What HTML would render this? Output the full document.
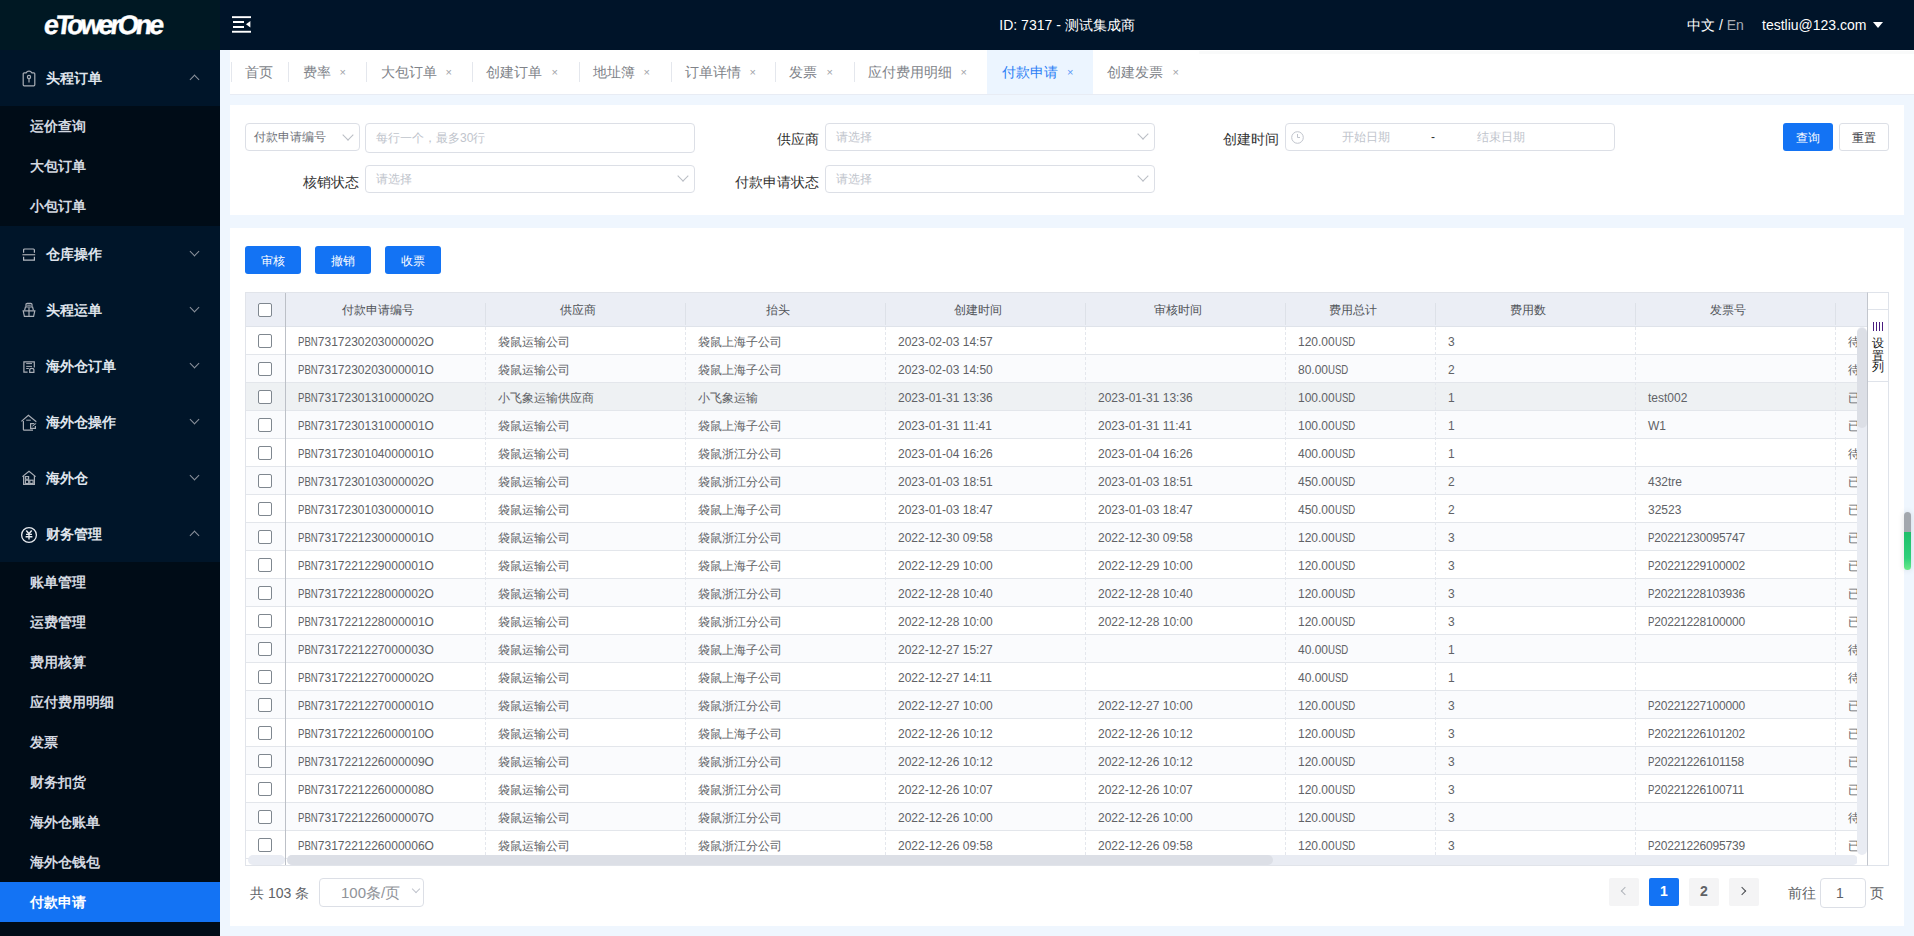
<!DOCTYPE html>
<html><head><meta charset="utf-8"><title>付款申请</title>
<style>
*{margin:0;padding:0;box-sizing:border-box}
html,body{width:1914px;height:936px;overflow:hidden}
body{position:relative;background:#eff6fe;font-family:"Liberation Sans",sans-serif;color:#606266}
.abs{position:absolute}
/* header */
#hdr{position:absolute;left:0;top:0;width:1914px;height:50px;background:#001429}
#logo{position:absolute;left:0;top:0;width:220px;height:50px;background:#001823}
#logo span{position:absolute;left:42px;top:8px;font:bold 27px/34px "Liberation Sans",sans-serif;color:#fff;letter-spacing:-3.1px;transform:skewX(-7deg);transform-origin:0 100%;-webkit-text-stroke:0.4px #fff}
#ham{position:absolute;left:232px;top:16px}
#hid{position:absolute;left:0;width:1914px;left:220px;width:1694px;top:16px;text-align:center;font-size:14px;line-height:18px;color:#fff}
#lang{position:absolute;left:1687px;top:16px;font-size:14px;line-height:18px;color:#fff}
#lang i{font-style:normal;color:#a8adb5}
#user{position:absolute;left:1762px;top:16px;font-size:14px;line-height:18px;color:#fff}
#caret{position:absolute;left:1873px;top:22px;width:0;height:0;border-left:5px solid transparent;border-right:5px solid transparent;border-top:6px solid #fff}
/* sidebar */
#side{position:absolute;left:0;top:50px;width:220px;height:886px;background:#001529}
.mi{position:absolute;left:0;width:220px;height:56px}
.mi .t{position:absolute;left:46px;top:19px;font-size:14px;line-height:18px;font-weight:bold;color:#dfe4ec}
.mi svg{position:absolute}
.mi .ch{position:absolute;left:191px;top:24px;width:7px;height:7px;border-left:1px solid #8c939d;border-top:1px solid #8c939d}
.mi .ch.dn{transform:rotate(225deg);top:22px}
.mi .ch.up{transform:rotate(45deg);top:26px}
.sub{position:absolute;left:0;width:220px;background:#000c17}
.si{position:absolute;left:0;width:220px;height:40px}
.si .t{position:absolute;left:30px;top:11px;font-size:14px;line-height:18px;font-weight:bold;color:#d3d8e0}
.si.act{background:#1373f4}
.si.act .t{color:#fff}
/* tabs */
#tabs{position:absolute;left:230px;top:50px;width:1684px;height:45px;background:#fff;border-bottom:1px solid #e8ecf4}
.tab{position:absolute;top:0;height:44px;font-size:14px;line-height:18px;color:#808389}
.tab .tx{position:absolute;top:13px;white-space:nowrap}
.tab .x{position:absolute;top:13px;font-size:11px;color:#a0a3a8}
.tsep{position:absolute;top:12px;width:1px;height:20px;background:#e4e7ed}
.tab.act{background:#ecf5ff;color:#2b7ef5}
.tab.act .x{color:#5a9af7}
/* panels */
#fp{position:absolute;left:230px;top:105px;width:1674px;height:110px;background:#fff}
#tp{position:absolute;left:230px;top:228px;width:1674px;height:698px;background:#fff}
.box{position:absolute;border:1px solid #dcdfe6;border-radius:4px;background:#fff}
.ph{position:absolute;font-size:12px;line-height:16px;color:#c0c4cc;white-space:nowrap}
.lbl{position:absolute;font-size:14px;line-height:18px;color:#333;white-space:nowrap;text-align:right}
.arr{position:absolute;width:8px;height:8px;border-right:1px solid #b9bdc4;border-bottom:1px solid #b9bdc4;transform:rotate(45deg)}
.btn{position:absolute;height:28px;border-radius:3px;font-size:12px;line-height:28px;padding-top:1px;text-align:center;color:#fff;background:#1373f4;font-weight:500}
.btn.pl{background:#fff;color:#3d4046;border:1px solid #dcdfe6;line-height:26px;padding-top:1px;font-weight:normal}
/* table */
#tbl{position:absolute;left:245px;top:292px;width:1644px;height:574px;border:1px solid #e1e4ea;overflow:hidden;background:#fff}
#thd{position:absolute;left:0;top:0;width:1622px;height:34px;background:#ebeef5;border-bottom:1px solid #dfe3ea}
.th{position:absolute;top:9px;font-size:12px;line-height:16px;color:#5c5f66;text-align:center;white-space:nowrap}
.hsep{position:absolute;top:10px;width:1px;height:22px;background:#dde1e8}
.row{position:absolute;left:0;width:1622px;height:28px;border-bottom:1px solid #e3e6eb;background:#fff}
.row.str{background:#fafbfd}
.row.hov{background:#eef1f3}
.row .c{position:absolute;top:7px;font-size:12px;line-height:16px;color:#606266;white-space:nowrap}
.cb{position:absolute;left:12px;top:7px;width:14px;height:14px;border:1px solid #7f878f;border-radius:2px;background:#fff}
.vsol{position:absolute;top:0;width:1px;height:574px;background:#bcc0c7}
.vdash{position:absolute;top:34px;width:0;height:528px;border-left:1px dashed #e4e7ed}
/* scrollbars */
.sbtrack{position:absolute;background:#e9ecf3;border-radius:5px}
.sbthumb{position:absolute;background:#dcdfe6;border-radius:5px}
#setcol{position:absolute;left:1867px;top:292px;width:22px;height:574px;border:1px solid #dfe3ea;border-left-color:#c2c6cd;background:#fff}
#setcol .ln{position:absolute;left:0;width:20px;height:1px;background:#dfe3ea}
#setcol .vt{position:absolute;left:4px;font-size:11.5px;line-height:12px;color:#111;font-weight:500}
/* pagination */
.pg{position:absolute;top:878px;width:30px;height:28px;background:#f4f4f5;border-radius:2px;font-size:14px;line-height:26px;text-align:center;font-weight:bold;color:#606266}
.pg.act{background:#1373f4;color:#fff}
#pill{position:absolute;left:1904px;top:512px;width:7px;height:58px;border-radius:4px;background:linear-gradient(#a3a7ad 0,#a3a7ad 20px,#1fbf6a 20px,#2fd07a 46px,#6bea88 58px);box-shadow:0 0 6px rgba(0,0,0,0.12)}
.row .c b.l{font-weight:normal;display:inline-block;transform:scaleX(.8);transform-origin:0 0}
.lbl{margin-top:1px}
.th{color:#515459}

</style></head>
<body>
<div id="hdr"><div id="logo"><span>eTowerOne</span></div>
<svg id="ham" width="20" height="18" viewBox="0 0 20 18"><rect x="0" y="0.2" width="19" height="1.9" fill="#fff"/><rect x="1" y="5" width="11" height="2" fill="#fff"/><rect x="1" y="10" width="11" height="2" fill="#fff"/><rect x="0" y="14.8" width="19" height="1.9" fill="#fff"/><path d="M18.4 5 L14 8.3 L18.4 11.6 Z" fill="#fff"/></svg>
<div id="hid">ID: 7317 - 测试集成商</div>
<div id="lang">中文 / <i>En</i></div><div id="user">testliu@123.com</div><div id="caret"></div></div>
<div id="side">
<div class="mi" style="top:0px"><svg style="left:22px;top:20px" width="14" height="17" viewBox="0 0 14 17" fill="none" stroke="#a9aeb6" stroke-width="1.2"><path d="M4.3 2.8 H2.2 a1 1 0 0 0 -1 1 V14.8 a1 1 0 0 0 1 1 H11.8 a1 1 0 0 0 1 -1 V3.8 a1 1 0 0 0 -1 -1 H9.7"/><path d="M4.3 3.2 Q4.6 1.2 7 1.2 Q9.4 1.2 9.7 3.2"/><circle cx="7" cy="7" r="1.6"/><path d="M7 8.6 V12.6"/></svg><span class="t">头程订单</span><i class="ch up"></i></div>
<div class="mi" style="top:176px"><svg style="left:22px;top:20px" width="14" height="16" viewBox="0 0 14 16" fill="none" stroke="#b4b9c1" stroke-width="1.2"><path d="M1.6 6.7 V4 a1 1 0 0 1 1 -1 H11.4 a1 1 0 0 1 1 1 V6.7"/><path d="M1.6 10.7 V14.2 H12.4 V10.7"/><path d="M0.4 8.7 H13.2" stroke="#8e949c" stroke-width="1.4"/></svg><span class="t">仓库操作</span><i class="ch dn"></i></div>
<div class="mi" style="top:232px"><svg style="left:22px;top:20px" width="14" height="16" viewBox="0 0 14 16" fill="none" stroke="#a9aeb6" stroke-width="1.2"><path d="M4 4.8 V2.6 Q4 1.4 5.2 1.4 H8.8 Q10 1.4 10 2.6 V4.8"/><path d="M5.2 3.2 H8.8" stroke-width="1"/><path d="M2.6 8.4 L3.4 5 H10.6 L11.4 8.4"/><path d="M1.2 8.8 H12.8 L11.6 14.4 H2.4 Z"/><path d="M7 5.5 V14.4"/></svg><span class="t">头程运单</span><i class="ch dn"></i></div>
<div class="mi" style="top:288px"><svg style="left:22px;top:20px" width="14" height="16" viewBox="0 0 14 16" fill="none" stroke="#a9aeb6" stroke-width="1.2"><path d="M5.6 14.2 H1.9 V3.9 H12.3 V9.6"/><path d="M4.2 5.6 H10 M4.2 8.4 H10 M4.2 10.5 H6.8" stroke-width="1"/><path d="M7.7 14.3 V12 Q7.7 10.4 9.8 10.4 Q11.9 10.4 11.9 12 V14.3 Z"/></svg><span class="t">海外仓订单</span><i class="ch dn"></i></div>
<div class="mi" style="top:344px"><svg style="left:20px;top:20px" width="18" height="18" viewBox="0 0 18 18" fill="none" stroke="#a9aeb6" stroke-width="1.2"><path d="M1.4 7.4 L8.4 1.4 L16.3 7.8"/><path d="M3.4 7 V15.4 Q3.4 16.2 4.2 16.2 H13"/><path d="M6.2 6.2 H10.8" stroke-width="1"/><path d="M14.4 9.7 H10.6 V14.4 H15.4 V12"/><path d="M12.4 12.2 L16.2 9.4" stroke-width="1"/></svg><span class="t">海外仓操作</span><i class="ch dn"></i></div>
<div class="mi" style="top:400px"><svg style="left:22px;top:20px" width="14" height="16" viewBox="0 0 14 16" fill="none" stroke="#a9aeb6" stroke-width="1.2"><path d="M0.4 6.6 L7 1.3 L13.6 6.6"/><path d="M1.6 6 V14.4 H12.4 V6"/><rect x="3.4" y="6.6" width="3.2" height="2.6"/><rect x="3.4" y="10.2" width="3.3" height="3.3"/><rect x="7.8" y="10.2" width="3.3" height="3.3"/></svg><span class="t">海外仓</span><i class="ch dn"></i></div>
<div class="mi" style="top:456px"><svg style="left:20px;top:20px" width="18" height="18" viewBox="0 0 18 18" fill="none" stroke="#e6e9ee" stroke-width="1.3"><circle cx="9" cy="9" r="7.4"/><path d="M6.3 4.6 L9 7.8 L11.7 4.6" stroke-width="1.5"/><path d="M9 7.8 V13.4 M6 8.4 H12 M5.6 10.8 H12.4" stroke-width="1.4"/></svg><span class="t">财务管理</span><i class="ch up"></i></div>
<div class="sub" style="top:56px;height:120px">
<div class="si" style="top:0px"><span class="t">运价查询</span></div>
<div class="si" style="top:40px"><span class="t">大包订单</span></div>
<div class="si" style="top:80px"><span class="t">小包订单</span></div>
</div>
<div class="sub" style="top:512px;height:374px">
<div class="si" style="top:0px"><span class="t">账单管理</span></div>
<div class="si" style="top:40px"><span class="t">运费管理</span></div>
<div class="si" style="top:80px"><span class="t">费用核算</span></div>
<div class="si" style="top:120px"><span class="t">应付费用明细</span></div>
<div class="si" style="top:160px"><span class="t">发票</span></div>
<div class="si" style="top:200px"><span class="t">财务扣货</span></div>
<div class="si" style="top:240px"><span class="t">海外仓账单</span></div>
<div class="si" style="top:280px"><span class="t">海外仓钱包</span></div>
<div class="si act" style="top:320px"><span class="t">付款申请</span></div>
</div></div>
<div id="tabs">
<i class="tsep" style="left:1px"></i>
<div class="tab" style="left:0.8000000000000114px;width:57.69999999999999px"><span class="tx" style="left:14px">首页</span></div>
<i class="tsep" style="left:58px"></i>
<div class="tab" style="left:58.5px;width:78.0px"><span class="tx" style="left:14px">费率</span><span class="x" style="left:51px">×</span></div>
<i class="tsep" style="left:136px"></i>
<div class="tab" style="left:136.5px;width:105.89999999999998px"><span class="tx" style="left:14px">大包订单</span><span class="x" style="left:79px">×</span></div>
<i class="tsep" style="left:242px"></i>
<div class="tab" style="left:242.39999999999998px;width:106.20000000000005px"><span class="tx" style="left:14px">创建订单</span><span class="x" style="left:79px">×</span></div>
<i class="tsep" style="left:349px"></i>
<div class="tab" style="left:348.6px;width:92.0px"><span class="tx" style="left:14px">地址簿</span><span class="x" style="left:65px">×</span></div>
<i class="tsep" style="left:441px"></i>
<div class="tab" style="left:440.6px;width:104.79999999999995px"><span class="tx" style="left:14px">订单详情</span><span class="x" style="left:79px">×</span></div>
<i class="tsep" style="left:545px"></i>
<div class="tab" style="left:545.4px;width:78.10000000000002px"><span class="tx" style="left:14px">发票</span><span class="x" style="left:51px">×</span></div>
<i class="tsep" style="left:624px"></i>
<div class="tab" style="left:623.5px;width:133.39999999999998px"><span class="tx" style="left:14px">应付费用明细</span><span class="x" style="left:107px">×</span></div>
<div class="tab act" style="left:757px;width:106px"><span class="tx" style="left:15px">付款申请</span><span class="x" style="left:80px">×</span></div>
<div class="tab" style="left:863.4000000000001px;width:106.59999999999991px"><span class="tx" style="left:14px">创建发票</span><span class="x" style="left:79px">×</span></div>
</div>
<div id="fp"></div>
<div class="box" style="left:245px;top:123px;width:115px;height:28px"></div>
<span class="ph" style="left:254px;top:129px;color:#70737a">付款申请编号</span><i class="arr" style="left:344px;top:131px"></i>
<div class="box" style="left:365px;top:123px;width:330px;height:30px"></div>
<span class="ph" style="left:376px;top:130px">每行一个，最多30行</span>
<span class="lbl" style="left:777px;top:129px">供应商</span>
<div class="box" style="left:825px;top:123px;width:330px;height:28px"></div>
<span class="ph" style="left:836px;top:129px">请选择</span><i class="arr" style="left:1139px;top:130px"></i>
<span class="lbl" style="left:1223px;top:129px">创建时间</span>
<div class="box" style="left:1285px;top:123px;width:330px;height:28px"></div>
<svg class="abs" style="left:1291px;top:131px" width="13" height="13" viewBox="0 0 13 13" fill="none" stroke="#c0c4cc" stroke-width="1"><circle cx="6.5" cy="6.5" r="5.8"/><path d="M6.5 3 V6.5 H9"/></svg>
<span class="ph" style="left:1342px;top:129px">开始日期</span><span class="ph" style="left:1431px;top:129px;color:#303133">-</span><span class="ph" style="left:1477px;top:129px">结束日期</span>
<div class="btn" style="left:1783px;top:123px;width:50px">查询</div>
<div class="btn pl" style="left:1839px;top:123px;width:50px">重置</div>
<span class="lbl" style="left:303px;top:172px">核销状态</span>
<div class="box" style="left:365px;top:165px;width:330px;height:28px"></div>
<span class="ph" style="left:376px;top:171px">请选择</span><i class="arr" style="left:679px;top:172px"></i>
<span class="lbl" style="left:735px;top:172px">付款申请状态</span>
<div class="box" style="left:825px;top:165px;width:330px;height:28px"></div>
<span class="ph" style="left:836px;top:171px">请选择</span><i class="arr" style="left:1139px;top:172px"></i>
<div id="tp"></div>
<div class="btn" style="left:245px;top:246px;width:56px">审核</div>
<div class="btn" style="left:315px;top:246px;width:56px">撤销</div>
<div class="btn" style="left:385px;top:246px;width:56px">收票</div>
<div id="tbl">
<div id="thd"><div class="cb" style="top:10px"></div>
<span class="th" style="left:32px;width:200px">付款申请编号</span>
<i class="hsep" style="left:239px"></i>
<span class="th" style="left:232px;width:200px">供应商</span>
<i class="hsep" style="left:439px"></i>
<span class="th" style="left:432px;width:200px">抬头</span>
<i class="hsep" style="left:639px"></i>
<span class="th" style="left:632px;width:200px">创建时间</span>
<i class="hsep" style="left:839px"></i>
<span class="th" style="left:832px;width:200px">审核时间</span>
<i class="hsep" style="left:1039px"></i>
<span class="th" style="left:1032px;width:150px">费用总计</span>
<i class="hsep" style="left:1189px"></i>
<span class="th" style="left:1182px;width:200px">费用数</span>
<i class="hsep" style="left:1389px"></i>
<span class="th" style="left:1382px;width:200px">发票号</span>
<i class="hsep" style="left:1589px"></i>
</div>
<div class="row" style="top:34px"><div class="cb"></div><span class="c" style="left:52px"><b class="l" style="margin-right:-4.9px">PBN</b>7317230203000002O</span><span class="c" style="left:252px">袋鼠运输公司</span><span class="c" style="left:452px">袋鼠上海子公司</span><span class="c" style="left:652px">2023-02-03 14:57</span><span class="c" style="left:852px"></span><span class="c" style="left:1052px">120.00<b class="l" style="margin-right:-5.1px">USD</b></span><span class="c" style="left:1202px">3</span><span class="c" style="left:1402px"></span><span class="c" style="left:1602px">待</span></div>
<div class="row str" style="top:62px"><div class="cb"></div><span class="c" style="left:52px"><b class="l" style="margin-right:-4.9px">PBN</b>7317230203000001O</span><span class="c" style="left:252px">袋鼠运输公司</span><span class="c" style="left:452px">袋鼠上海子公司</span><span class="c" style="left:652px">2023-02-03 14:50</span><span class="c" style="left:852px"></span><span class="c" style="left:1052px">80.00<b class="l" style="margin-right:-5.1px">USD</b></span><span class="c" style="left:1202px">2</span><span class="c" style="left:1402px"></span><span class="c" style="left:1602px">待</span></div>
<div class="row hov" style="top:90px"><div class="cb"></div><span class="c" style="left:52px"><b class="l" style="margin-right:-4.9px">PBN</b>7317230131000002O</span><span class="c" style="left:252px">小飞象运输供应商</span><span class="c" style="left:452px">小飞象运输</span><span class="c" style="left:652px">2023-01-31 13:36</span><span class="c" style="left:852px">2023-01-31 13:36</span><span class="c" style="left:1052px">100.00<b class="l" style="margin-right:-5.1px">USD</b></span><span class="c" style="left:1202px">1</span><span class="c" style="left:1402px">test002</span><span class="c" style="left:1602px">已</span></div>
<div class="row str" style="top:118px"><div class="cb"></div><span class="c" style="left:52px"><b class="l" style="margin-right:-4.9px">PBN</b>7317230131000001O</span><span class="c" style="left:252px">袋鼠运输公司</span><span class="c" style="left:452px">袋鼠上海子公司</span><span class="c" style="left:652px">2023-01-31 11:41</span><span class="c" style="left:852px">2023-01-31 11:41</span><span class="c" style="left:1052px">100.00<b class="l" style="margin-right:-5.1px">USD</b></span><span class="c" style="left:1202px">1</span><span class="c" style="left:1402px">W1</span><span class="c" style="left:1602px">已</span></div>
<div class="row" style="top:146px"><div class="cb"></div><span class="c" style="left:52px"><b class="l" style="margin-right:-4.9px">PBN</b>7317230104000001O</span><span class="c" style="left:252px">袋鼠运输公司</span><span class="c" style="left:452px">袋鼠浙江分公司</span><span class="c" style="left:652px">2023-01-04 16:26</span><span class="c" style="left:852px">2023-01-04 16:26</span><span class="c" style="left:1052px">400.00<b class="l" style="margin-right:-5.1px">USD</b></span><span class="c" style="left:1202px">1</span><span class="c" style="left:1402px"></span><span class="c" style="left:1602px">待</span></div>
<div class="row str" style="top:174px"><div class="cb"></div><span class="c" style="left:52px"><b class="l" style="margin-right:-4.9px">PBN</b>7317230103000002O</span><span class="c" style="left:252px">袋鼠运输公司</span><span class="c" style="left:452px">袋鼠浙江分公司</span><span class="c" style="left:652px">2023-01-03 18:51</span><span class="c" style="left:852px">2023-01-03 18:51</span><span class="c" style="left:1052px">450.00<b class="l" style="margin-right:-5.1px">USD</b></span><span class="c" style="left:1202px">2</span><span class="c" style="left:1402px">432tre</span><span class="c" style="left:1602px">已</span></div>
<div class="row" style="top:202px"><div class="cb"></div><span class="c" style="left:52px"><b class="l" style="margin-right:-4.9px">PBN</b>7317230103000001O</span><span class="c" style="left:252px">袋鼠运输公司</span><span class="c" style="left:452px">袋鼠上海子公司</span><span class="c" style="left:652px">2023-01-03 18:47</span><span class="c" style="left:852px">2023-01-03 18:47</span><span class="c" style="left:1052px">450.00<b class="l" style="margin-right:-5.1px">USD</b></span><span class="c" style="left:1202px">2</span><span class="c" style="left:1402px">32523</span><span class="c" style="left:1602px">已</span></div>
<div class="row str" style="top:230px"><div class="cb"></div><span class="c" style="left:52px"><b class="l" style="margin-right:-4.9px">PBN</b>7317221230000001O</span><span class="c" style="left:252px">袋鼠运输公司</span><span class="c" style="left:452px">袋鼠浙江分公司</span><span class="c" style="left:652px">2022-12-30 09:58</span><span class="c" style="left:852px">2022-12-30 09:58</span><span class="c" style="left:1052px">120.00<b class="l" style="margin-right:-5.1px">USD</b></span><span class="c" style="left:1202px">3</span><span class="c" style="left:1402px;letter-spacing:-0.2px"><b class="l" style="margin-right:-1.6px">P</b>20221230095747</span><span class="c" style="left:1602px">已</span></div>
<div class="row" style="top:258px"><div class="cb"></div><span class="c" style="left:52px"><b class="l" style="margin-right:-4.9px">PBN</b>7317221229000001O</span><span class="c" style="left:252px">袋鼠运输公司</span><span class="c" style="left:452px">袋鼠上海子公司</span><span class="c" style="left:652px">2022-12-29 10:00</span><span class="c" style="left:852px">2022-12-29 10:00</span><span class="c" style="left:1052px">120.00<b class="l" style="margin-right:-5.1px">USD</b></span><span class="c" style="left:1202px">3</span><span class="c" style="left:1402px;letter-spacing:-0.2px"><b class="l" style="margin-right:-1.6px">P</b>20221229100002</span><span class="c" style="left:1602px">已</span></div>
<div class="row str" style="top:286px"><div class="cb"></div><span class="c" style="left:52px"><b class="l" style="margin-right:-4.9px">PBN</b>7317221228000002O</span><span class="c" style="left:252px">袋鼠运输公司</span><span class="c" style="left:452px">袋鼠浙江分公司</span><span class="c" style="left:652px">2022-12-28 10:40</span><span class="c" style="left:852px">2022-12-28 10:40</span><span class="c" style="left:1052px">120.00<b class="l" style="margin-right:-5.1px">USD</b></span><span class="c" style="left:1202px">3</span><span class="c" style="left:1402px;letter-spacing:-0.2px"><b class="l" style="margin-right:-1.6px">P</b>20221228103936</span><span class="c" style="left:1602px">已</span></div>
<div class="row" style="top:314px"><div class="cb"></div><span class="c" style="left:52px"><b class="l" style="margin-right:-4.9px">PBN</b>7317221228000001O</span><span class="c" style="left:252px">袋鼠运输公司</span><span class="c" style="left:452px">袋鼠浙江分公司</span><span class="c" style="left:652px">2022-12-28 10:00</span><span class="c" style="left:852px">2022-12-28 10:00</span><span class="c" style="left:1052px">120.00<b class="l" style="margin-right:-5.1px">USD</b></span><span class="c" style="left:1202px">3</span><span class="c" style="left:1402px;letter-spacing:-0.2px"><b class="l" style="margin-right:-1.6px">P</b>20221228100000</span><span class="c" style="left:1602px">已</span></div>
<div class="row str" style="top:342px"><div class="cb"></div><span class="c" style="left:52px"><b class="l" style="margin-right:-4.9px">PBN</b>7317221227000003O</span><span class="c" style="left:252px">袋鼠运输公司</span><span class="c" style="left:452px">袋鼠上海子公司</span><span class="c" style="left:652px">2022-12-27 15:27</span><span class="c" style="left:852px"></span><span class="c" style="left:1052px">40.00<b class="l" style="margin-right:-5.1px">USD</b></span><span class="c" style="left:1202px">1</span><span class="c" style="left:1402px"></span><span class="c" style="left:1602px">待</span></div>
<div class="row" style="top:370px"><div class="cb"></div><span class="c" style="left:52px"><b class="l" style="margin-right:-4.9px">PBN</b>7317221227000002O</span><span class="c" style="left:252px">袋鼠运输公司</span><span class="c" style="left:452px">袋鼠上海子公司</span><span class="c" style="left:652px">2022-12-27 14:11</span><span class="c" style="left:852px"></span><span class="c" style="left:1052px">40.00<b class="l" style="margin-right:-5.1px">USD</b></span><span class="c" style="left:1202px">1</span><span class="c" style="left:1402px"></span><span class="c" style="left:1602px">待</span></div>
<div class="row str" style="top:398px"><div class="cb"></div><span class="c" style="left:52px"><b class="l" style="margin-right:-4.9px">PBN</b>7317221227000001O</span><span class="c" style="left:252px">袋鼠运输公司</span><span class="c" style="left:452px">袋鼠浙江分公司</span><span class="c" style="left:652px">2022-12-27 10:00</span><span class="c" style="left:852px">2022-12-27 10:00</span><span class="c" style="left:1052px">120.00<b class="l" style="margin-right:-5.1px">USD</b></span><span class="c" style="left:1202px">3</span><span class="c" style="left:1402px;letter-spacing:-0.2px"><b class="l" style="margin-right:-1.6px">P</b>20221227100000</span><span class="c" style="left:1602px">已</span></div>
<div class="row" style="top:426px"><div class="cb"></div><span class="c" style="left:52px"><b class="l" style="margin-right:-4.9px">PBN</b>7317221226000010O</span><span class="c" style="left:252px">袋鼠运输公司</span><span class="c" style="left:452px">袋鼠上海子公司</span><span class="c" style="left:652px">2022-12-26 10:12</span><span class="c" style="left:852px">2022-12-26 10:12</span><span class="c" style="left:1052px">120.00<b class="l" style="margin-right:-5.1px">USD</b></span><span class="c" style="left:1202px">3</span><span class="c" style="left:1402px;letter-spacing:-0.2px"><b class="l" style="margin-right:-1.6px">P</b>20221226101202</span><span class="c" style="left:1602px">已</span></div>
<div class="row str" style="top:454px"><div class="cb"></div><span class="c" style="left:52px"><b class="l" style="margin-right:-4.9px">PBN</b>7317221226000009O</span><span class="c" style="left:252px">袋鼠运输公司</span><span class="c" style="left:452px">袋鼠浙江分公司</span><span class="c" style="left:652px">2022-12-26 10:12</span><span class="c" style="left:852px">2022-12-26 10:12</span><span class="c" style="left:1052px">120.00<b class="l" style="margin-right:-5.1px">USD</b></span><span class="c" style="left:1202px">3</span><span class="c" style="left:1402px;letter-spacing:-0.2px"><b class="l" style="margin-right:-1.6px">P</b>20221226101158</span><span class="c" style="left:1602px">已</span></div>
<div class="row" style="top:482px"><div class="cb"></div><span class="c" style="left:52px"><b class="l" style="margin-right:-4.9px">PBN</b>7317221226000008O</span><span class="c" style="left:252px">袋鼠运输公司</span><span class="c" style="left:452px">袋鼠浙江分公司</span><span class="c" style="left:652px">2022-12-26 10:07</span><span class="c" style="left:852px">2022-12-26 10:07</span><span class="c" style="left:1052px">120.00<b class="l" style="margin-right:-5.1px">USD</b></span><span class="c" style="left:1202px">3</span><span class="c" style="left:1402px;letter-spacing:-0.2px"><b class="l" style="margin-right:-1.6px">P</b>20221226100711</span><span class="c" style="left:1602px">已</span></div>
<div class="row str" style="top:510px"><div class="cb"></div><span class="c" style="left:52px"><b class="l" style="margin-right:-4.9px">PBN</b>7317221226000007O</span><span class="c" style="left:252px">袋鼠运输公司</span><span class="c" style="left:452px">袋鼠浙江分公司</span><span class="c" style="left:652px">2022-12-26 10:00</span><span class="c" style="left:852px">2022-12-26 10:00</span><span class="c" style="left:1052px">120.00<b class="l" style="margin-right:-5.1px">USD</b></span><span class="c" style="left:1202px">3</span><span class="c" style="left:1402px"></span><span class="c" style="left:1602px">待</span></div>
<div class="row" style="top:538px"><div class="cb"></div><span class="c" style="left:52px"><b class="l" style="margin-right:-4.9px">PBN</b>7317221226000006O</span><span class="c" style="left:252px">袋鼠运输公司</span><span class="c" style="left:452px">袋鼠浙江分公司</span><span class="c" style="left:652px">2022-12-26 09:58</span><span class="c" style="left:852px">2022-12-26 09:58</span><span class="c" style="left:1052px">120.00<b class="l" style="margin-right:-5.1px">USD</b></span><span class="c" style="left:1202px">3</span><span class="c" style="left:1402px;letter-spacing:-0.2px"><b class="l" style="margin-right:-1.6px">P</b>20221226095739</span><span class="c" style="left:1602px">已</span></div>
<div class="sbtrack" style="left:1611px;top:34px;width:10px;height:528px"></div>
<div class="sbthumb" style="left:1611px;top:35px;width:10px;height:100px"></div>
<div class="sbtrack" style="left:2px;top:562px;width:37px;height:10px"></div>
<div class="sbtrack" style="left:41px;top:562px;width:1571px;height:10px"></div>
<div class="sbthumb" style="left:41px;top:562px;width:986px;height:10px"></div>
<div class="abs" style="left:1611px;top:562px;width:11px;height:10px;background:#fff"></div>
<i class="vsol" style="left:39px"></i>
<i class="vdash" style="left:239px"></i>
<i class="vdash" style="left:439px"></i>
<i class="vdash" style="left:639px"></i>
<i class="vdash" style="left:839px"></i>
<i class="vdash" style="left:1039px"></i>
<i class="vdash" style="left:1189px"></i>
<i class="vdash" style="left:1389px"></i>
<i class="vdash" style="left:1589px"></i>
</div>
<div id="setcol"><i class="ln" style="top:16px"></i><i class="ln" style="top:88px"></i><svg class="abs" style="left:4px;top:29px" width="11" height="9"><path d="M1.5 0V9M4.5 0V9M7.5 0V9M10.5 0V9" stroke="#4a1d80" stroke-width="1"/></svg><span class="vt" style="top:44px">设</span><span class="vt" style="top:57px">置</span><span class="vt" style="top:68px">列</span></div>
<span class="abs" style="left:250px;top:884px;font-size:14px;line-height:18px;color:#606266;white-space:nowrap">共 103 条</span>
<div class="box" style="left:319px;top:878px;width:105px;height:29px"></div>
<span class="abs" style="left:341px;top:883px;font-size:15px;line-height:19px;color:#909399;white-space:nowrap">100条/页</span><i class="arr" style="left:413px;top:886px;width:6px;height:6px;border-color:#c0c4cc"></i>
<div class="pg" style="left:1609px"><i class="arr" style="left:13px;top:10px;width:6px;height:6px;transform:rotate(135deg);border-color:#b0b4bb"></i></div>
<div class="pg act" style="left:1649px">1</div>
<div class="pg" style="left:1689px">2</div>
<div class="pg" style="left:1729px"><i class="arr" style="left:10px;top:10px;width:6px;height:6px;transform:rotate(-45deg);border-color:#4a4d52"></i></div>
<span class="abs" style="left:1788px;top:884px;font-size:14px;line-height:18px;color:#606266">前往</span>
<div class="box" style="left:1820px;top:878px;width:46px;height:30px"></div>
<span class="abs" style="left:1817px;top:884px;width:46px;text-align:center;font-size:14px;line-height:18px;color:#606266">1</span>
<span class="abs" style="left:1870px;top:884px;font-size:14px;line-height:18px;color:#606266">页</span>
<div id="pill"></div>
<div class="abs" style="left:1199px;top:51px;width:715px;height:3px;background:#f9fafa"></div>
</body></html>
